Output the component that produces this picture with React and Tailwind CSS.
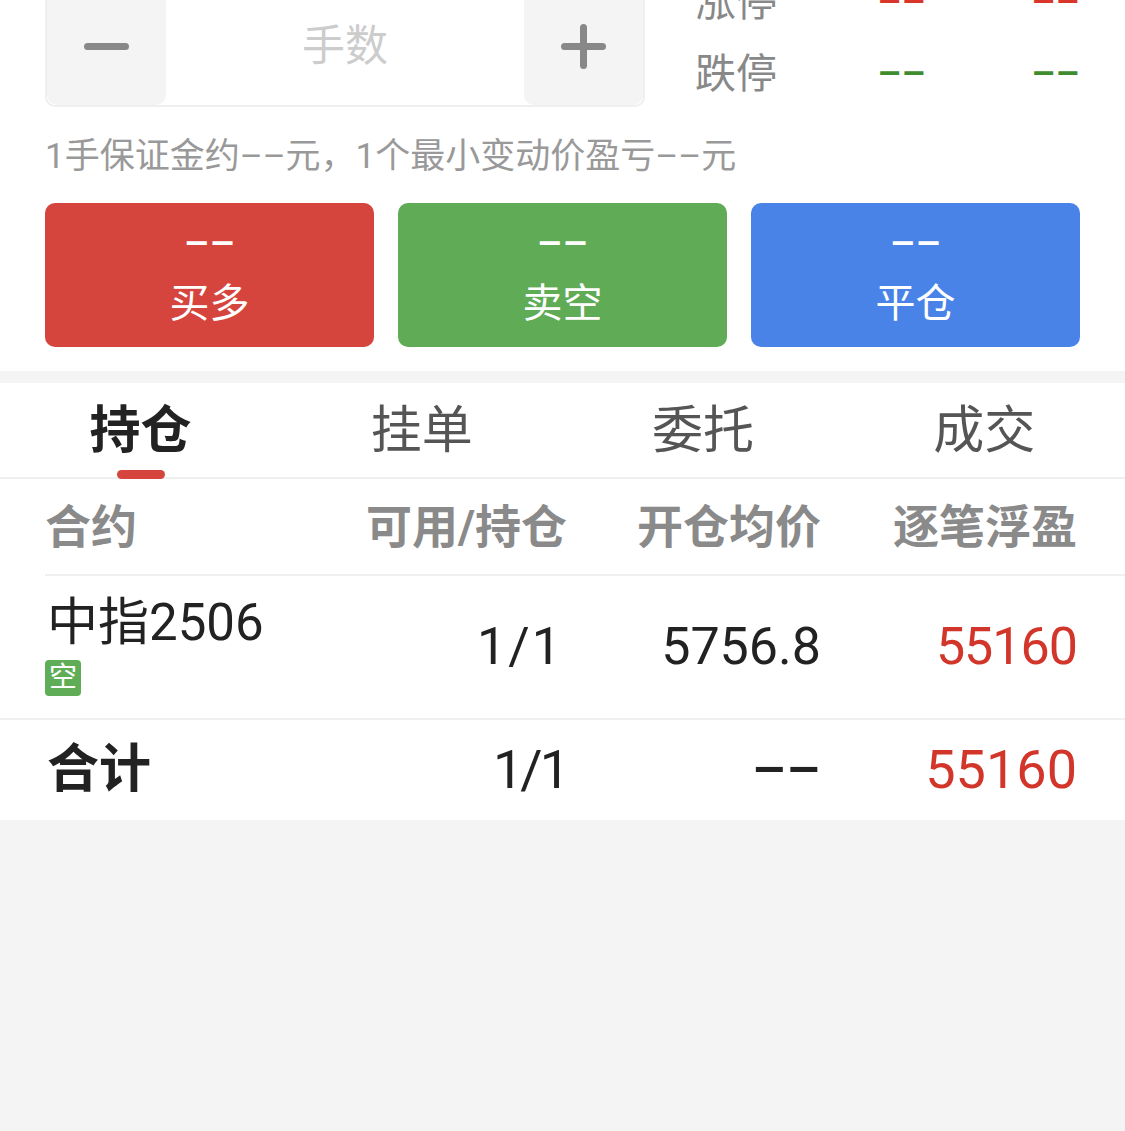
import React from 'react';

const font = "font-['Roboto','Noto_Sans_CJK_SC',sans-serif]";

const limits = [
  { label: '涨停', color: 'text-[#d9362b]' },
  { label: '跌停', color: 'text-[#3f8c2f]' },
];

const actions = [
  { label: '买多', bg: 'bg-[#d5453d]' },
  { label: '卖空', bg: 'bg-[#5fab56]' },
  { label: '平仓', bg: 'bg-[#4a83e8]' },
];

const tabs = ['持仓', '挂单', '委托', '成交'];

function Stepper() {
  return (
    <div className="-mt-[15px] flex h-[122px] w-[600px] shrink-0 overflow-hidden rounded-[10px] border-2 border-[#efefef] bg-white">
      <button className="flex w-[119px] items-center justify-center rounded-[10px] bg-[#f4f4f4]">
        <span className="block h-[7px] w-[45px] rounded-full bg-[#888]" />
      </button>
      <div className="flex flex-1 items-center justify-center text-[43px] leading-none text-[#cccccc]">手数</div>
      <button className="flex w-[119px] items-center justify-center rounded-[10px] bg-[#f4f4f4]">
        <span className="relative block h-[45px] w-[45px]">
          <span className="absolute left-0 top-[19px] h-[7px] w-[45px] rounded-full bg-[#888]" />
          <span className="absolute left-[19px] top-0 h-[45px] w-[7px] rounded-full bg-[#888]" />
        </span>
      </button>
    </div>
  );
}

export default function App() {
  return (
    <div className={`min-h-[1131px] bg-[#f4f4f4] ${font}`}>
      <div className="bg-white px-[45px] pb-[24px]">
        <div className="flex h-[107px] items-start">
          <Stepper />
          <div className="-mt-[34px] ml-[50px] flex-1">
            {limits.map((row) => (
              <div key={row.label} className="grid h-[72px] grid-cols-[auto_1fr_154px] items-center">
                <span className="whitespace-nowrap text-[41px] leading-none text-[#888]">{row.label}</span>
                <span className={`text-right text-[38px] font-medium leading-none ${row.color}`}>––</span>
                <span className={`text-right text-[38px] font-medium leading-none ${row.color}`}>––</span>
              </div>
            ))}
          </div>
        </div>
        <p className="mt-[32px] text-[35px] leading-[36px] text-[#999]">1手保证金约––元，1个最小变动价盈亏––元</p>
        <div className="mt-[28px] grid grid-cols-3 gap-[24px]">
          {actions.map((a) => (
            <button key={a.label} className={`flex h-[144px] flex-col items-center rounded-[10px] text-white ${a.bg}`}>
              <span className="mt-[21px] text-[40px] font-medium leading-[40px]">––</span>
              <span className="mt-[20px] text-[40px] leading-[40px]">{a.label}</span>
            </button>
          ))}
        </div>
      </div>

      <div className="mt-[12px] bg-white">
        <div className="grid h-[96px] grid-cols-4 border-b-2 border-[#efefef]">
          {tabs.map((t, i) => (
            <div key={t} className="relative flex items-center justify-center">
              <span className={i === 0 ? 'text-[51px] font-bold leading-none text-[#222]' : 'text-[51px] leading-none text-[#555]'}>{t}</span>
              {i === 0 && <span className="absolute bottom-[-2px] h-[9px] w-[48px] rounded-full bg-[#d5453d]" />}
            </div>
          ))}
        </div>

        <div className="pl-[45px]">
          <div className="grid h-[97px] grid-cols-[1fr_222px_254px_256px] items-center border-b-2 border-[#efefef] pr-[48px] text-[46px] font-bold leading-none text-[#8a8a8a]">
            <span>合约</span>
            <span className="text-right">可用/持仓</span>
            <span className="text-right">开仓均价</span>
            <span className="text-right">逐笔浮盈</span>
          </div>
        </div>

        <div className="grid h-[144px] grid-cols-[1fr_222px_254px_256px] items-center border-b-2 border-[#efefef] pl-[45px] pr-[48px] text-[52px] leading-none text-[#222]">
          <div className="flex flex-col items-start">
            <span className="pl-[2px] text-[51px] leading-[50px]">中指2506</span>
            <span className="mt-[12px] flex h-[36px] w-[36px] items-center justify-center rounded-[4px] bg-[#5fae57] text-[28px] leading-none text-white">空</span>
          </div>
          <span className="pr-[4px] text-right tracking-[2px]">1/1</span>
          <span className="text-right">5756.8</span>
          <span className="text-right tracking-[-1px] text-[#d2352a]">55160</span>
        </div>

        <div className="grid h-[100px] grid-cols-[1fr_222px_254px_256px] items-center pl-[45px] pr-[48px] text-[54px] leading-none text-[#222]">
          <span className="pl-[2px] text-[52px] font-bold">合计</span>
          <span className="text-right tracking-[-3px]">1/1</span>
          <span className="text-right font-medium">––</span>
          <span className="text-right text-[#d2352a]">55160</span>
        </div>
      </div>
    </div>
  );
}
